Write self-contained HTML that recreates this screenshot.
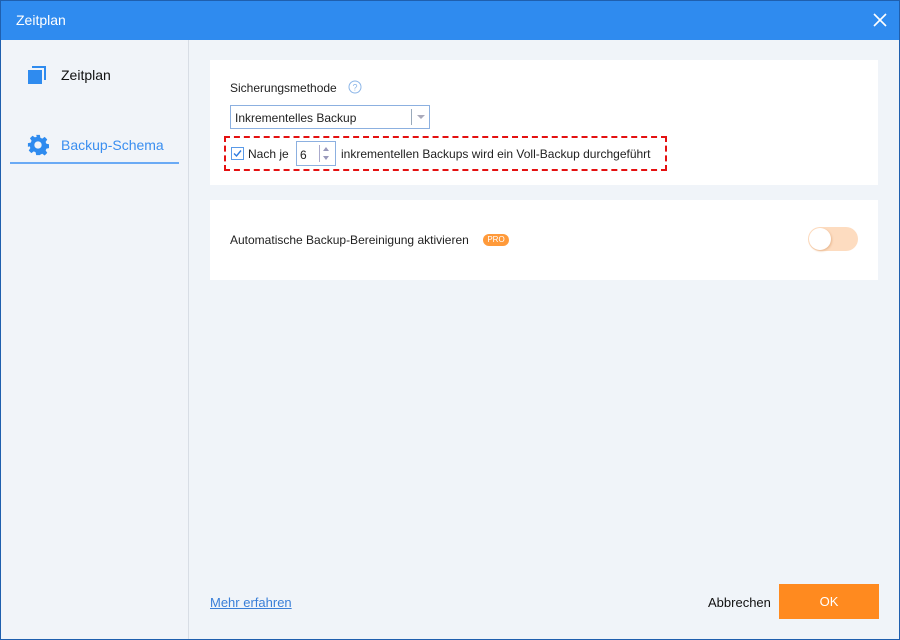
<!DOCTYPE html>
<html><head><meta charset="utf-8"><style>
*{margin:0;padding:0;box-sizing:border-box}
body{width:900px;height:640px;overflow:hidden;font-family:"Liberation Sans",sans-serif;font-size:12px;color:#222;background:#fff}
.win{position:absolute;left:0;top:0;width:900px;height:640px;border:1px solid #1f5fae;background:#f0f4f9}
.title{position:absolute;left:0;top:0;width:898px;height:39px;background:#2f8bef;color:#fff;font-size:14px;line-height:39px;padding-left:15px;z-index:2}
.close{position:absolute;right:12px;top:12px}
.side{position:absolute;left:0;top:39px;width:188px;height:599px;background:#f1f4f9;border-right:1px solid #d8dde5}
.main{position:absolute;left:188px;top:39px;width:710px;height:599px;background:#f0f4f9}
.card{position:absolute;background:#fff}
.a{position:absolute;white-space:nowrap}
</style></head><body>
<div class="win">
<div class="title">Zeitplan
<svg class="close" width="14" height="14" viewBox="0 0 14 14"><path d="M1 1L13 13M13 1L1 13" stroke="#fff" stroke-width="1.6"/></svg></div>
<div class="side">
<svg class="a" style="left:26px;top:25px" width="20" height="20" viewBox="0 0 20 20"><path d="M5 1H19V15H17V3H5Z" fill="#2f8bef"/><rect x="1" y="5" width="14" height="14" fill="#2f8bef"/></svg>
<div class="a" style="left:60px;top:27px;font-size:14px;color:#111">Zeitplan</div>
<svg class="a" style="left:26px;top:94px" width="22" height="22" viewBox="0 0 24 24"><path fill="#2f8bef" d="M10 1h4l.6 3.1 2 .9 2.7-1.8 2.8 2.8-1.8 2.7.9 2 3.1.6v4l-3.1.6-.9 2 1.8 2.7-2.8 2.8-2.7-1.8-2 .9L14 23h-4l-.6-3.1-2-.9-2.7 1.8-2.8-2.8 1.8-2.7-.9-2L1 14v-4l3.1-.6.9-2L3.2 4.7 6 1.9l2.7 1.8 2-.9zM12 8a4 4 0 1 0 0 8 4 4 0 1 0 0-8z"/></svg>
<div class="a" style="left:60px;top:97px;font-size:14px;color:#3a8ef0">Backup-Schema</div>
<div class="a" style="left:9px;top:122px;width:169px;height:2px;background:#6aaaf5"></div>
</div>
<div class="main">
<div class="card" style="left:21px;top:20px;width:668px;height:125px">
<div class="a" style="left:20px;top:21px">Sicherungsmethode</div>
<svg class="a" style="left:138px;top:20px" width="14" height="14" viewBox="0 0 14 14"><circle cx="7" cy="7" r="6" fill="none" stroke="#8cb6e8"/><text x="7" y="10.5" font-size="9" text-anchor="middle" fill="#8cb6e8" font-family="Liberation Sans">?</text></svg>
<div class="a" style="left:20px;top:45px;width:200px;height:24px;border:1px solid #8cb0e0;padding:5px 4px">Inkrementelles Backup
<div class="a" style="left:180px;top:3px;width:1px;height:16px;background:#9ab"></div>
<div class="a" style="left:186px;top:9px;border:4px solid transparent;border-top:4px solid #aab;border-bottom:0"></div></div>
<div class="a" style="left:14px;top:76px;width:443px;height:35px;border:2px dashed #e41010"></div>
<svg class="a" style="left:21px;top:87px" width="13" height="13" viewBox="0 0 13 13"><rect x=".5" y=".5" width="12" height="12" fill="#fff" stroke="#5a9ae8"/><path d="M3 6.5l2.5 2.5L10 3.5" stroke="#2f7be0" stroke-width="1.4" fill="none"/></svg>
<div class="a" style="left:38px;top:87px">Nach je</div>
<div class="a" style="left:86px;top:81px;width:40px;height:25px;border:1px solid #8cb0e0;padding:6px 3px">6
<div class="a" style="left:22px;top:3px;width:1px;height:17px;background:#aac"></div>
<div class="a" style="left:26px;top:5px;border:3px solid transparent;border-bottom:4px solid #99b;border-top:0"></div>
<div class="a" style="left:26px;top:14px;border:3px solid transparent;border-top:4px solid #99b;border-bottom:0"></div></div>
<div class="a" style="left:131px;top:87px">inkrementellen Backups wird ein Voll-Backup durchgeführt</div>
</div>
<div class="card" style="left:21px;top:160px;width:668px;height:80px">
<div class="a" style="left:20px;top:33px">Automatische Backup-Bereinigung aktivieren</div>
<div class="a" style="left:273px;top:34px;width:26px;height:12px;border-radius:6px;background:#ff9a3a;color:#fff;font-size:8px;line-height:12px;text-align:center">PRO</div>
<div class="a" style="left:598px;top:27px;width:50px;height:24px;border-radius:12px;background:#fddcc0"></div>
<div class="a" style="left:599px;top:28px;width:22px;height:22px;border-radius:11px;background:#fff;box-shadow:1px 1px 2px #e8b890"></div>
</div>
<div class="a" style="left:21px;top:555px;color:#3a7fd8;text-decoration:underline;font-size:13px">Mehr erfahren</div>
<div class="a" style="left:519px;top:555px;font-size:13px;color:#111">Abbrechen</div>
<div class="a" style="left:590px;top:544px;width:100px;height:35px;background:#ff8a1f;color:#fff;font-size:13px;line-height:35px;text-align:center">OK</div>
</div>
</div>
</body></html>
